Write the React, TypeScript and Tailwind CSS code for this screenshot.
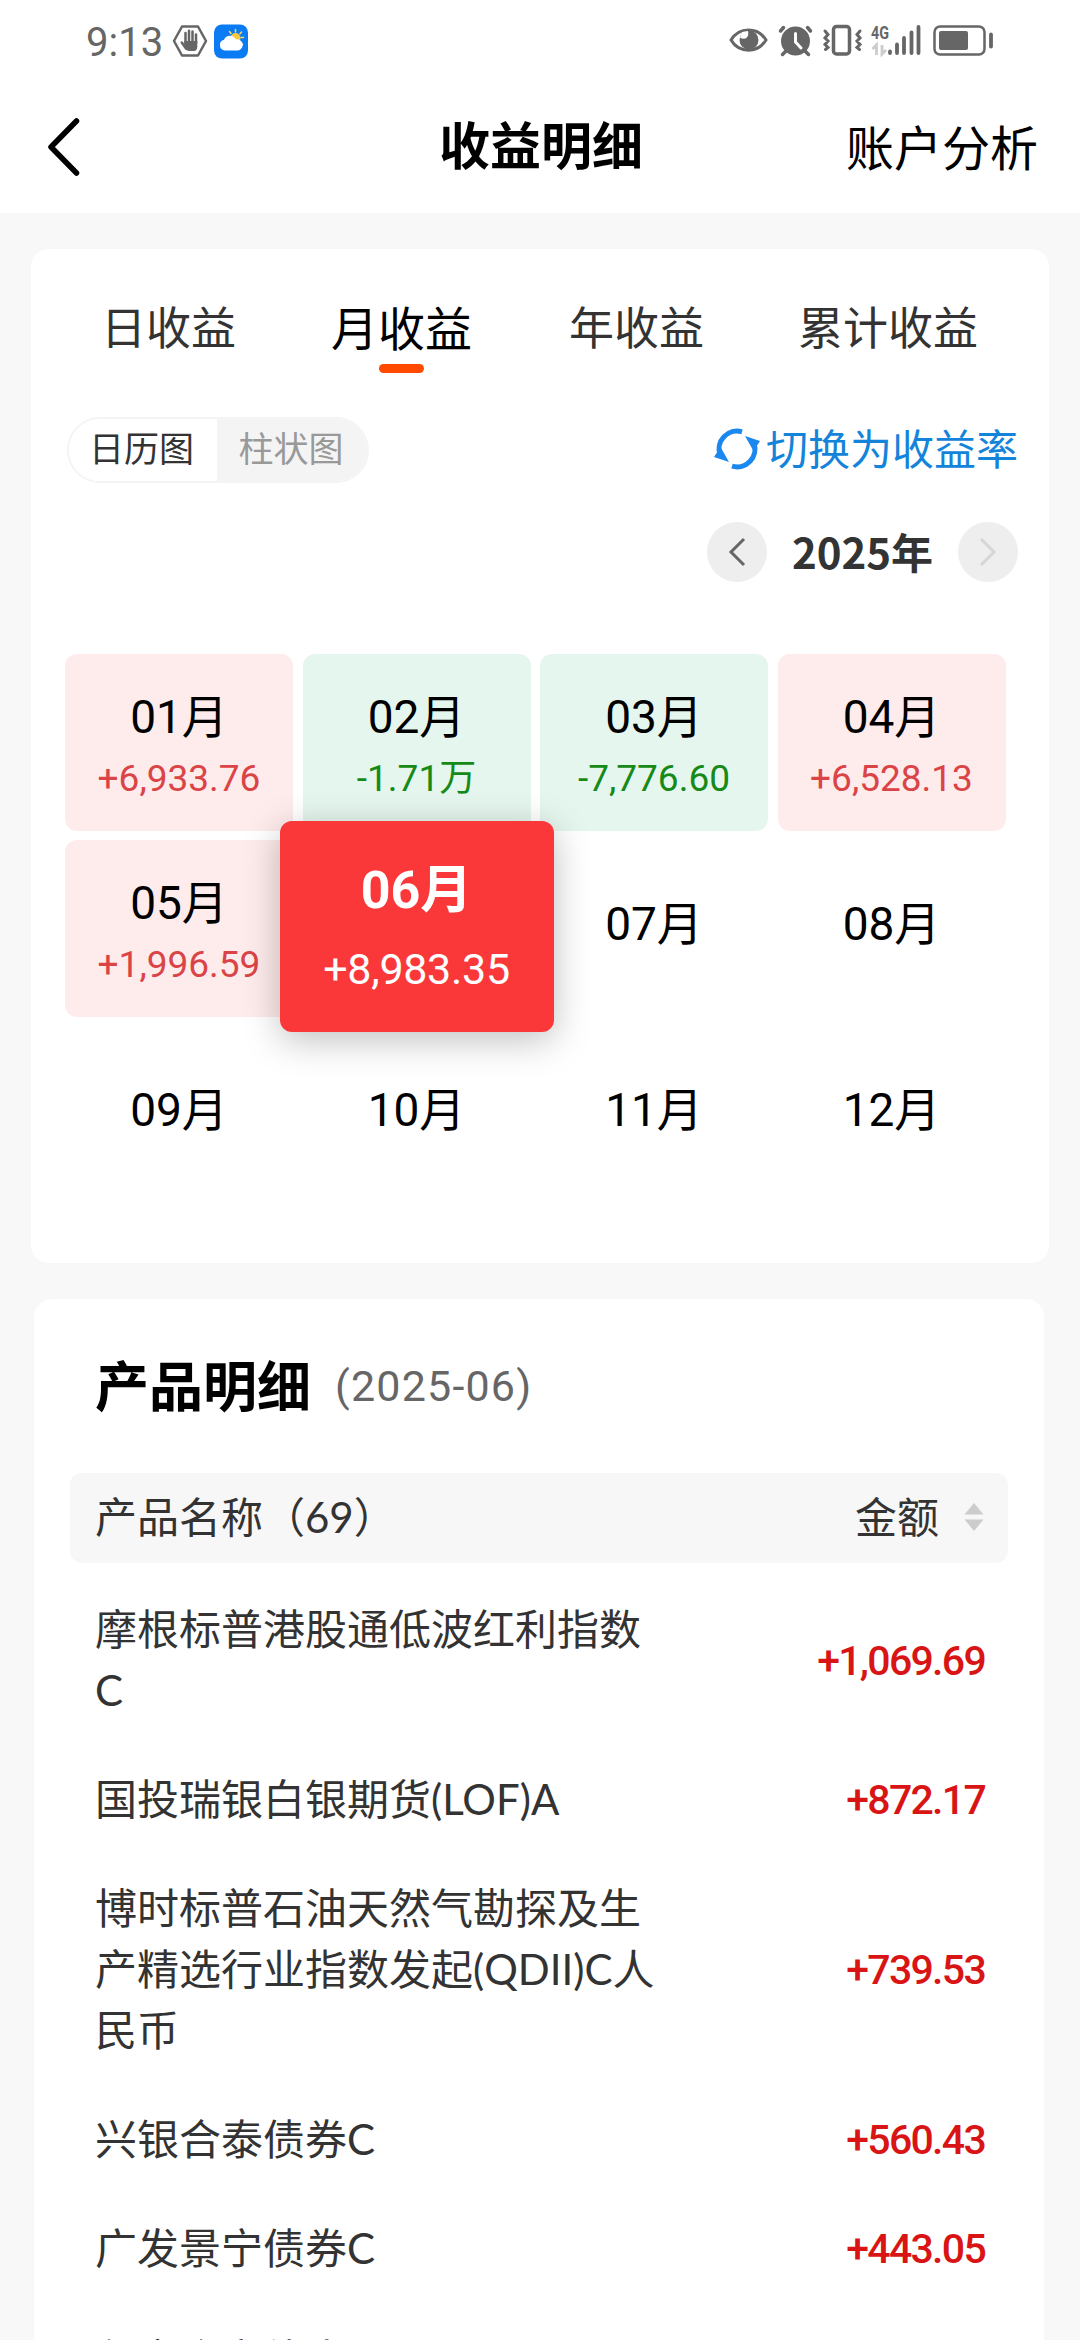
import { ReactNode } from "react";

type Month = { label: string; amount?: string; kind?: "up" | "down" | "active" };

const tabs = [
  { title: "日收益", width: "w-[275px]" },
  { title: "月收益", width: "w-[191px]", active: true },
  { title: "年收益", width: "w-[279px]" },
  { title: "累计收益", width: "w-[224px]" },
];

const months: Month[] = [
  { label: "01月", amount: "+6,933.76", kind: "up" },
  { label: "02月", amount: "-1.71万", kind: "down" },
  { label: "03月", amount: "-7,776.60", kind: "down" },
  { label: "04月", amount: "+6,528.13", kind: "up" },
  { label: "05月", amount: "+1,996.59", kind: "up" },
  { label: "06月", amount: "+8,983.35", kind: "active" },
  { label: "07月" },
  { label: "08月" },
  { label: "09月" },
  { label: "10月" },
  { label: "11月" },
  { label: "12月" },
];

const products = [
  { name: "摩根标普港股通低波红利指数C", amount: "+1,069.69" },
  { name: "国投瑞银白银期货(LOF)A", amount: "+872.17" },
  { name: "博时标普石油天然气勘探及生产精选行业指数发起(QDII)C人民币", amount: "+739.53" },
  { name: "兴银合泰债券C", amount: "+560.43" },
  { name: "广发景宁债券C", amount: "+443.05" },
];

function StatusBar() {
  return (
    <div className="flex h-20 items-center justify-between pl-[86px] pr-[85px] text-[#666]">
      <div className="flex items-center">
        <span className="w-[86px] pt-[5px] font-[Roboto] text-[40px] leading-[76px]">9:13</span>
        <svg className="mt-[2px] h-[34px] w-[36px]" viewBox="0 0 36 34" fill="none">
          <path d="M10 2.500h16L34 17l-8 14.500h-16L2 17z" stroke="currentColor" strokeWidth="2.500" strokeLinejoin="round" />
          <path
            d="M13.500 19V9M17 18V6.800M20.500 18V7.500M24 19V10.500M14 24.500L9.800 18.500"
            stroke="currentColor"
            strokeWidth="2.500"
            strokeLinecap="round"
          />
          <path d="M12.300 17h13v5.500c0 3-1.500 4.500-3.500 4.500h-4.500c-2 0-3.500-1-5-4z" fill="currentColor" />
        </svg>
        <svg className="ml-[5px] mt-[2px] h-[35px] w-[36px]" viewBox="0 0 36 35">
          <rect x="1" y=".5" width="34" height="34" rx="8" fill="#0a7bf2" />
          <path
            d="M22.500 5.500v2.500M16.500 7.500l1.500 2M28.500 8l-1.500 1.800M30.500 13.500h-2.500M28 19l1.500 1.500"
            stroke="#ffd76a"
            strokeWidth="1.500"
            strokeLinecap="round"
          />
          <circle cx="22.500" cy="14" r="5" fill="#fbc73c" />
          <path d="M12 26.500a5.500 5.500 0 0 1-1-10.800 6.500 6.500 0 0 1 11.800-.2 5.600 5.600 0 1 1 .7 11z" fill="#fff" />
        </svg>
      </div>
      <svg className="h-8 w-[266px] overflow-visible" viewBox="0 0 266 32" fill="none">
        {/* eye */}
        <path d="M2 16C10 2.500 29 2.500 37 16C29 29.500 10 29.500 2 16z" stroke="currentColor" strokeWidth="3" />
        <circle cx="20" cy="16" r="9.500" fill="currentColor" />
        <path d="M11 13.500c5 3 9.500 0 8-6.500l-6 1z" fill="#fff" />
        {/* alarm clock */}
        <circle cx="66.500" cy="17" r="14.500" fill="currentColor" />
        <path d="M51.500 7l3-3.500M81.500 7l-3-3.500M57 27l-3.500 3.500M76 27l3.500 3.500" stroke="currentColor" strokeWidth="3.500" strokeLinecap="round" />
        <path d="M66.500 9.500v8.500l5.500 6" stroke="#fff" strokeWidth="3" strokeLinecap="round" />
        {/* vibrate */}
        <rect x="104.500" y="2.500" width="16" height="27.500" rx="3" stroke="currentColor" strokeWidth="3.500" />
        <path
          d="M96 7l3 3.500-3 3.500 3 3-3 3.500 3 3-2.500 2M131 7l-3 3.500 3 3.500-3 3 3 3.500-3 3 2.500 2"
          stroke="currentColor"
          strokeWidth="3"
          strokeLinecap="round"
        />
        {/* mobile signal */}
        <text x="142" y="14.500" fill="currentColor" className="font-[Roboto] text-[18px] font-bold" textLength="18" lengthAdjust="spacingAndGlyphs">
          4G
        </text>
        <path d="M143.500 25l4-4v10M153 21v9l4-4" stroke="#ccc" strokeWidth="2.800" />
        <path d="M161 29v-1.500M168 29v-8.500M175 29v-15M182.500 29V8.500M189.500 29V3" stroke="currentColor" strokeWidth="3.800" strokeLinecap="round" />
        {/* battery */}
        <rect x="205.500" y="2.500" width="50" height="28" rx="5.500" stroke="currentColor" strokeWidth="2.500" />
        <rect x="210" y="7" width="29" height="19" rx="2" fill="currentColor" />
        <path d="M262 10.500v12" stroke="currentColor" strokeWidth="3.800" strokeLinecap="round" />
      </svg>
    </div>
  );
}

function Header() {
  return (
    <header className="grid h-[133px] grid-cols-[1fr_auto_1fr] items-center pl-11 pr-[42px] text-black">
      <svg className="-mt-[2px] h-[62px] w-[38px]" viewBox="0 0 38 62" fill="none">
        <path d="M32.500 6L7 32l25.500 26" stroke="currentColor" strokeWidth="5.500" strokeLinecap="round" strokeLinejoin="round" />
      </svg>
      <h1 className="text-[51px] font-bold">收益明细</h1>
      <button className="justify-self-end pt-[3px] text-[48px]">账户分析</button>
    </header>
  );
}

function YearButton({ children, className }: { children: ReactNode; className: string }) {
  return (
    <button className={`flex h-[60px] w-[60px] items-center justify-center rounded-full bg-[#eee] ${className}`}>
      <svg className="h-8 w-5" viewBox="0 0 20 32" fill="none" stroke="currentColor" strokeWidth="3">
        {children}
      </svg>
    </button>
  );
}

function MonthCell({ month }: { month: Month }) {
  if (month.kind === "active") {
    return (
      <div className="relative z-10 -mx-[23px] -mt-[19px] -mb-[15px] flex flex-col items-center rounded-xl bg-[#fa383a] text-white shadow-[0_8px_36px_rgba(0,0,0,0.25)]">
        <div className="mt-[35px] text-[52px] leading-[70px] font-bold">{month.label}</div>
        <div className="mt-[15px] text-[43px] leading-[56px] tracking-[-0.3px]">{month.amount}</div>
      </div>
    );
  }

  const tone =
    month.kind === "up" ? "bg-[#feebeb] text-[#db4446]" : month.kind === "down" ? "bg-[#e5f6ee] text-[#168a16]" : "";

  return (
    <div className={`flex flex-col items-center rounded-xl ${tone} ${month.amount ? "pt-[29px]" : "pt-[50px]"}`}>
      <div className="text-[46px] leading-[68px] text-black">{month.label}</div>
      {month.amount && <div className="mt-[3px] text-[37px] leading-[50px]">{month.amount}</div>}
    </div>
  );
}

function IncomeCard() {
  return (
    <section className="mx-[31px] h-[1014px] rounded-[18px] bg-white">
      <div className="flex h-[137px] pt-[43px]">
        {tabs.map((tab) => (
          <div key={tab.title} className={`flex flex-col items-center ${tab.width}`}>
            <span className={`leading-[72px] whitespace-nowrap ${tab.active ? "text-[47px] text-black" : "text-[45px] text-[#333]"}`}>
              {tab.title}
            </span>
            {tab.active && <span className="h-[9px] w-[45px] shrink-0 rounded-full bg-[#ff4a00]" />}
          </div>
        ))}
      </div>

      <div className="mt-[31px] flex items-center justify-between pl-9 pr-[31px]">
        <div className="flex h-[66px] w-[302px] overflow-hidden rounded-full border-2 border-[#f4f4f4] text-[35px] leading-[59px]">
          <button className="w-[148px] bg-white pr-[3px] pb-[3px] text-[#333]">日历图</button>
          <button className="flex-1 bg-[#f4f4f4] pr-[2px] pb-[3px] text-[#999]">柱状图</button>
        </div>
        <button className="flex items-center pb-[2px] text-[42px] leading-[60px] text-[#1484db]">
          <svg className="mr-[6px] h-11 w-[46px]" viewBox="0 0 46 44" fill="none">
            <path d="M28 4.800A18 18 0 0 0 6 28M18 39.200A18 18 0 0 0 40 16" stroke="#1a88ee" strokeWidth="5" />
            <path d="M0 30l6.500-10L15 35zM46 14l-6.500 10L31 9z" fill="#1a88ee" />
          </svg>
          切换为收益率
        </button>
      </div>

      <div className="mt-[39px] flex items-center justify-end pr-[31px]">
        <YearButton className="text-[#666]">
          <path d="M17 3L4 16l13 13" />
        </YearButton>
        <span className="w-[191px] pb-[3px] text-center font-['Noto_Sans_CJK_SC'] text-[42px] leading-[57px] font-bold text-[#333]">2025年</span>
        <YearButton className="text-[#d6d6d6]">
          <path d="M3 3l13 13L3 29" />
        </YearButton>
      </div>

      <div className="mt-[72px] grid auto-rows-[177px] grid-cols-[repeat(4,228px)] gap-x-[9.500px] gap-y-[9px] pl-[34px] font-[Roboto,'Noto_Sans_CJK_SC',sans-serif]">
        {months.map((month) => (
          <MonthCell key={month.label} month={month} />
        ))}
      </div>
    </section>
  );
}

function ProductCard() {
  return (
    <section className="mt-9 mr-9 ml-[34px] h-[1100px] rounded-t-[18px] bg-white px-9">
      <div className="flex h-[174px] items-center pl-[25px]">
        <h2 className="text-[54px] font-bold text-black">产品明细</h2>
        <span className="ml-6 font-[Roboto] text-[43px] tracking-[1.200px] text-[#666]">(2025-06)</span>
      </div>
      <div className="flex h-[90px] items-center justify-between rounded-xl bg-[#f7f7f7] pb-[2px] pl-[25px] pr-6 text-[42px] text-[#333]">
        <span>产品名称（69）</span>
        <span className="flex items-center">
          金额
          <svg className="ml-[25px] h-7 w-5" viewBox="0 0 20 28" fill="#ccc">
            <path d="M10 0l9.500 11.500H.5zM10 28L.5 16.500h19z" />
          </svg>
        </span>
      </div>
      <ul className="pt-[12px]">
        {products.map((item) => (
          <li key={item.name} className="flex items-center justify-between py-6 pl-[25px] pr-[23px]">
            <span className="w-[565px] text-[42px] leading-[61px] text-[#333]">{item.name}</span>
            <span className="pt-[2px] font-[Roboto] text-[41px] leading-[59px] font-medium tracking-[-1.700px] text-[#d91414]">{item.amount}</span>
          </li>
        ))}
        <li className="pt-[26px] pl-[25px] text-[42px] leading-[61px] text-[#333]">永赢合享债券</li>
      </ul>
    </section>
  );
}

export default function App() {
  return (
    <div className="h-[2340px] w-[1080px] overflow-hidden bg-[#f8f8f8] font-[Lato,'Noto_Sans_CJK_SC',sans-serif]">
      <div className="mb-9 h-[213px] bg-white">
        <StatusBar />
        <Header />
      </div>
      <IncomeCard />
      <ProductCard />
    </div>
  );
}
